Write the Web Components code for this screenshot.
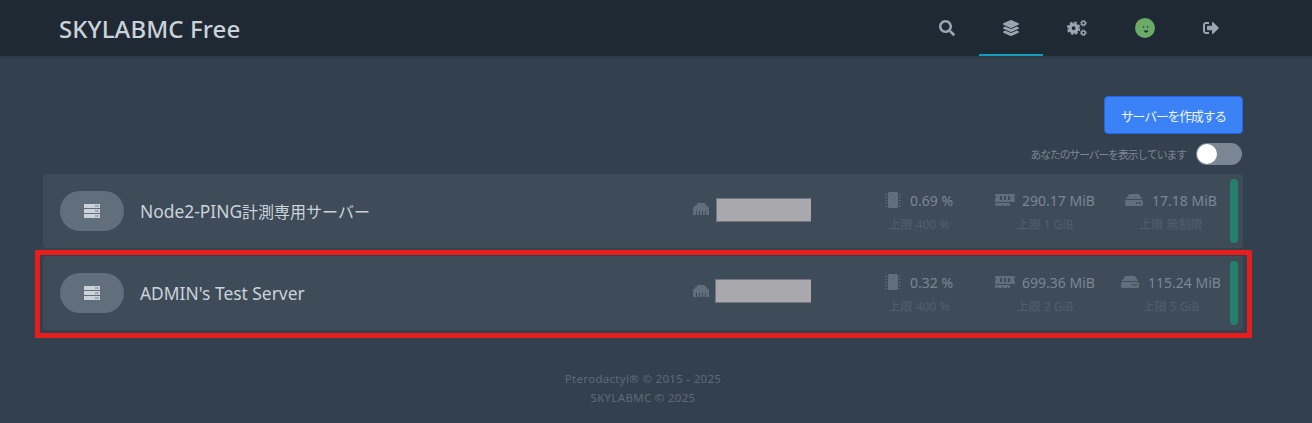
<!DOCTYPE html>
<html lang="ja">
<head>
<meta charset="utf-8">
<title>SKYLABMC Free</title>
<style>
html, body { margin: 0; height: 100%; overflow: hidden; }
body { background: #33404d; font-family: "Noto Sans", "Noto Sans CJK JP", sans-serif; }
</style>
</head>
<body>
<app-nav title="SKYLABMC Free"></app-nav>
<server-page>
    <server-row name="Node2-PING" name-ja="計測専用サーバー" mask-shift="2">
        <stat-cell kind="cpu" value="0.69 %" limit="上限 400 %"></stat-cell>
        <stat-cell kind="memory" value="290.17 MiB" limit="上限 1 GiB" gap="7"></stat-cell>
        <stat-cell kind="disk" value="17.18 MiB" limit="上限 無制限"></stat-cell>
    </server-row>
    <server-row name="ADMIN's Test Server" marked>
        <stat-cell kind="cpu" value="0.32 %" limit="上限 400 %"></stat-cell>
        <stat-cell kind="memory" value="699.36 MiB" limit="上限 2 GiB" gap="7"></stat-cell>
        <stat-cell kind="disk" value="115.24 MiB" limit="上限 5 GiB"></stat-cell>
    </server-row>
</server-page>
<page-footer></page-footer>

<script>
const ICONS = {
    search: '<svg viewBox="0 0 512 512" width="16" height="16"><path d="M505 442.7L405.3 343c-4.5-4.5-10.6-7-17-7H372c27.6-35.3 44-79.7 44-128C416 93.1 322.9 0 208 0S0 93.1 0 208s93.1 208 208 208c48.3 0 92.7-16.4 128-44v16.3c0 6.4 2.5 12.5 7 17l99.7 99.7c9.4 9.4 24.6 9.4 33.9 0l28.3-28.3c9.4-9.4 9.4-24.6.1-34zM208 336c-70.7 0-128-57.2-128-128 0-70.7 57.2-128 128-128 70.7 0 128 57.2 128 128 0 70.7-57.2 128-128 128z"/></svg>',
    layers: '<svg viewBox="0 0 512 512" width="16" height="16"><path d="M12.41 148.02l232.94 105.67c6.8 3.09 14.49 3.09 21.29 0l232.94-105.67c16.55-7.51 16.55-32.52 0-40.03L266.65 2.31a25.607 25.607 0 0 0-21.29 0L12.41 107.98c-16.55 7.51-16.55 32.53 0 40.04zm487.18 88.28l-58.09-26.33-161.64 73.27c-7.56 3.43-15.59 5.17-23.86 5.17s-16.29-1.74-23.86-5.17L70.51 209.97l-58.1 26.33c-16.55 7.5-16.55 32.5 0 40l232.94 105.59c6.8 3.08 14.49 3.08 21.29 0L499.59 276.3c16.55-7.5 16.55-32.5 0-40zm0 127.8l-57.87-26.23-161.86 73.37c-7.56 3.43-15.59 5.17-23.86 5.17s-16.29-1.74-23.86-5.17L70.29 337.87 12.41 364.1c-16.55 7.5-16.55 32.5 0 40l232.94 105.59c6.8 3.08 14.49 3.08 21.29 0L499.59 404.1c16.55-7.5 16.55-32.5 0-40z"/></svg>',
    cogs: '<svg viewBox="0 0 20 16" width="20" height="16"><circle cx="6.6" cy="8.2" r="3.6" fill="none" stroke="currentColor" stroke-width="3.4"/><circle cx="6.6" cy="8.2" r="5.8" fill="none" stroke="currentColor" stroke-width="1.8" stroke-dasharray="2.7 1.85"/><circle cx="16.4" cy="3.2" r="1.8" fill="none" stroke="currentColor" stroke-width="1.4"/><circle cx="16.4" cy="3.2" r="2.9" fill="none" stroke="currentColor" stroke-width="1" stroke-dasharray="1.3 .98"/><circle cx="16.4" cy="12.8" r="1.8" fill="none" stroke="currentColor" stroke-width="1.4"/><circle cx="16.4" cy="12.8" r="2.9" fill="none" stroke="currentColor" stroke-width="1" stroke-dasharray="1.3 .98"/></svg>',
    signout: '<svg viewBox="0 0 512 512" width="16" height="16"><path d="M497 273L329 441c-15 15-41 4.5-41-17v-96H152c-13.3 0-24-10.7-24-24v-96c0-13.3 10.7-24 24-24h136V88c0-21.4 25.9-32 41-17l168 168c9.3 9.4 9.3 24.6 0 34zM192 436v-40c0-6.6-5.4-12-12-12H96c-17.7 0-32-14.3-32-32V160c0-17.7 14.3-32 32-32h84c6.6 0 12-5.4 12-12V76c0-6.6-5.4-12-12-12H96c-53 0-96 43-96 96v192c0 53 43 96 96 96h84c6.6 0 12-5.4 12-12z"/></svg>',
    avatar: '<svg viewBox="0 0 20 20" width="20" height="20"><circle cx="10" cy="10" r="10" fill="#6aab68"/><path d="M1 6a10 10 0 0 1 3-4l.6.5a10 10 0 0 0-3 4z" fill="#b08a3c"/><circle cx="8.6" cy="9" r=".7" fill="#1f2933"/><circle cx="12.6" cy="9" r=".7" fill="#1f2933"/><path d="M9 12.6h4.2a2.1 2.1 0 0 1-4.2 0z" fill="#1f2933"/></svg>',
    server: '<svg viewBox="0 0 16 14" width="16" height="14"><path fill-rule="evenodd" d="M0 0h16v4H0zM11.4 1.2v1.6h1V1.2zM13.2 1.2v1.6h1V1.2zM0 5h16v4H0zM11.4 6.2v1.6h1V6.2zM13.2 6.2v1.6h1V6.2zM0 10h16v4H0zM11.4 11.2v1.6h1v-1.6zM13.2 11.2v1.6h1v-1.6z"/></svg>',
    ethernet: '<svg viewBox="0 0 512 512" width="16" height="16"><path d="M496 192h-48v-48c0-8.8-7.2-16-16-16h-48V80c0-8.8-7.2-16-16-16H144c-8.8 0-16 7.2-16 16v48H80c-8.8 0-16 7.2-16 16v48H16c-8.8 0-16 7.2-16 16v224c0 8.8 7.2 16 16 16h80V320h32v128h64V320h32v128h64V320h32v128h64V320h32v128h80c8.8 0 16-7.2 16-16V208c0-8.8-7.2-16-16-16z"/></svg>',
    cpu: '<svg viewBox="0 0 16 16" width="16" height="16"><rect x="3" y="0" width="10" height="16" rx="1.5"/><path d="M.5 2h1.6v1H.5zM.5 5h1.6v1H.5zM.5 8h1.6v1H.5zM.5 11h1.6v1H.5zM.5 14h1.6v1H.5zM13.9 2h1.6v1h-1.6zM13.9 5h1.6v1h-1.6zM13.9 8h1.6v1h-1.6zM13.9 11h1.6v1h-1.6zM13.9 14h1.6v1h-1.6z"/></svg>',
    memory: '<svg viewBox="0 0 640 512" width="20" height="16"><path d="M640 130.94V96c0-17.67-14.33-32-32-32H32C14.33 64 0 78.33 0 96v34.94c18.6 6.61 32 24.19 32 45.06s-13.4 38.45-32 45.06V320h640v-98.94c-18.6-6.61-32-24.19-32-45.06s13.4-38.45 32-45.06zM224 256h-64V128h64v128zm128 0h-64V128h64v128zm128 0h-64V128h64v128zM0 448h64v-26.67c0-8.84 7.16-16 16-16s16 7.16 16 16V448h128v-26.67c0-8.84 7.16-16 16-16s16 7.16 16 16V448h128v-26.67c0-8.84 7.16-16 16-16s16 7.16 16 16V448h64v-96H0v96z"/></svg>',
    disk: '<svg viewBox="0 0 576 512" width="18" height="16"><path d="M576 304v96c0 26.51-21.49 48-48 48H48c-26.51 0-48-21.49-48-48v-96c0-26.51 21.49-48 48-48h480c26.51 0 48 21.49 48 48zm-48-80a79.557 79.557 0 0 1 30.777 6.165L462.25 85.374A48.003 48.003 0 0 0 422.311 64H153.689a48 48 0 0 0-39.938 21.374L17.223 230.165A79.557 79.557 0 0 1 48 224h480zm-48 96c-17.673 0-32 14.327-32 32s14.327 32 32 32 32-14.327 32-32-14.327-32-32-32zm-96 0c-17.673 0-32 14.327-32 32s14.327 32 32 32 32-14.327 32-32-14.327-32-32-32z"/></svg>'
};

class AppNav extends HTMLElement {
    constructor() {
        super();
        this.shadow = this.attachShadow({ mode: 'open' });
    }

    connectedCallback() {
        const link = (icon, width, active) =>
            `<a class="${active ? 'active' : ''}" style="width:${width}px">${ICONS[icon]}</a>`;

        this.shadow.innerHTML = `
        <style>
        :host { display: block; height: 56px; background: #1f2933; box-shadow: 0 1px 3px rgba(0,0,0,.15); }
        .inner { display: flex; align-items: stretch; height: 56px; margin-left: 43px; width: 1200px; }
        .title { flex: 1; display: flex; align-items: center; padding-left: 16px; font-size: 24px; font-weight: 500; letter-spacing: .1px; color: #cbd2d9; }
        a { display: flex; align-items: center; justify-content: center; color: #9aa5b1; fill: currentColor; box-sizing: border-box; border-bottom: 2px solid transparent; border-top: 2px solid transparent; }
        a.active { border-bottom-color: #0e9fb8; }
        svg { display: block; }
        </style>
        <div class="inner">
            <div class="title">${this.getAttribute('title')}</div>
            ${link('search', 64)}
            ${link('layers', 64, true)}
            ${link('cogs', 68)}
            ${link('avatar', 68)}
            ${link('signout', 64)}
        </div>
        `;
    }
}

class ServerPage extends HTMLElement {
    constructor() {
        super();
        this.shadow = this.attachShadow({ mode: 'open' });
    }

    connectedCallback() {
        this.shadow.innerHTML = `
        <style>
        :host { display: block; margin-left: 43px; width: 1200px; padding-top: 40px; }
        .top { display: flex; justify-content: flex-end; }
        button { width: 139px; height: 38px; padding: 0; font: inherit; font-size: 12.8px; letter-spacing: -1.1px; color: #eff6ff; background: #3b82f6; border: 1px solid #2563eb; border-radius: 4px; }
        .switch { display: flex; justify-content: flex-end; align-items: center; gap: 10px; margin: 9px 1px 9px 0; height: 22px; font-size: 10.8px; letter-spacing: -1.05px; color: #7b8794; }
        .list { display: flex; flex-direction: column; gap: 8px; }
        </style>
        <div class="top"><button>サーバーを作成する</button></div>
        <div class="switch"><span>あなたのサーバーを表示しています</span><toggle-switch></toggle-switch></div>
        <div class="list"><slot></slot></div>
        `;
    }
}

class ToggleSwitch extends HTMLElement {
    constructor() {
        super();
        const shadow = this.attachShadow({ mode: 'open' });
        shadow.innerHTML = `
        <style>
        :host { display: block; width: 46px; height: 22px; border-radius: 11px; background: #7b8794; }
        i { display: block; width: 20px; height: 20px; margin: 1px; border-radius: 50%; background: #fff; }
        </style>
        <i></i>
        `;
    }
}

class ServerRow extends HTMLElement {
    constructor() {
        super();
        this.shadow = this.attachShadow({ mode: 'open' });
    }

    connectedCallback() {
        const ja = this.getAttribute('name-ja');
        const shift = this.getAttribute('mask-shift') || 0;
        const wide = this.hasAttribute('marked');

        this.shadow.innerHTML = `
        <style>
        :host { display: flex; position: relative; align-items: center; box-sizing: border-box; height: 74px; padding: 5px 5px 5px 17px; background: #3e4c59; border-radius: 4px; }
        .pill { display: flex; align-items: center; justify-content: center; width: 64px; height: 40px; border-radius: 20px; background: #616e7c; fill: #cbd2d9; }
        .name { flex: 1; margin: 0 0 0 16px; font-size: 17.4px; color: #cbd2d9; }
        .name span { font-size: 16px; }
        .addr { display: flex; align-items: center; gap: ${wide ? 6 : 7}px; width: 118px; margin: 0 45px 4px 0; fill: #616e7c; }
        .addr b { display: block; flex: 1; box-sizing: border-box; height: 24px; margin-top: ${shift}px; background: #a9a9ad; border: 1px solid #74777d; border-width: 1px 0 1px 1px; }
        .stats { display: grid; grid-template-columns: 126px 126px 126px; margin-right: -4px; }
        .bar { align-self: stretch; width: 8px; border-radius: 4px; background: #27806b; }
        .mark { position: absolute; left: -8px; right: -9px; top: -6px; bottom: -8px; border: 5px solid #e61e1e; }
        svg { display: block; }
        </style>
        <div class="pill">${ICONS.server}</div>
        <div class="name">${this.getAttribute('name')}${ja ? `<span>${ja}</span>` : ''}</div>
        <div class="addr">${ICONS.ethernet}<b></b></div>
        <div class="stats"><slot></slot></div>
        <div class="bar"></div>
        ${wide ? '<div class="mark"></div>' : ''}
        `;
    }
}

class StatCell extends HTMLElement {
    constructor() {
        super();
        this.shadow = this.attachShadow({ mode: 'open' });
    }

    connectedCallback() {
        const gap = this.getAttribute('gap') || 9;

        this.shadow.innerHTML = `
        <style>
        :host { display: flex; flex-direction: column; align-items: center; }
        .row { display: flex; align-items: center; gap: ${gap}px; height: 24px; font-size: 14px; color: #7b8794; fill: #616e7c; }
        .limit { margin: 3px 0 1px; font-size: 12px; color: #515f6c; }
        svg { display: block; }
        </style>
        <div class="row">${ICONS[this.getAttribute('kind')]}<span>${this.getAttribute('value')}</span></div>
        <div class="limit">${this.getAttribute('limit')}</div>
        `;
    }
}

class PageFooter extends HTMLElement {
    constructor() {
        super();
        this.shadow = this.attachShadow({ mode: 'open' });
    }

    connectedCallback() {
        this.shadow.innerHTML = `
        <style>
        :host { display: block; margin-left: 43px; width: 1200px; padding-top: 39px; text-align: center; font-size: 11.5px; line-height: 19px; letter-spacing: .3px; color: #5d6b79; }
        </style>
        <div>Pterodactyl® © 2015 - 2025</div>
        <div>SKYLABMC © 2025</div>
        `;
    }
}

customElements.define('app-nav', AppNav);
customElements.define('server-page', ServerPage);
customElements.define('toggle-switch', ToggleSwitch);
customElements.define('server-row', ServerRow);
customElements.define('stat-cell', StatCell);
customElements.define('page-footer', PageFooter);
</script>
</body>
</html>
